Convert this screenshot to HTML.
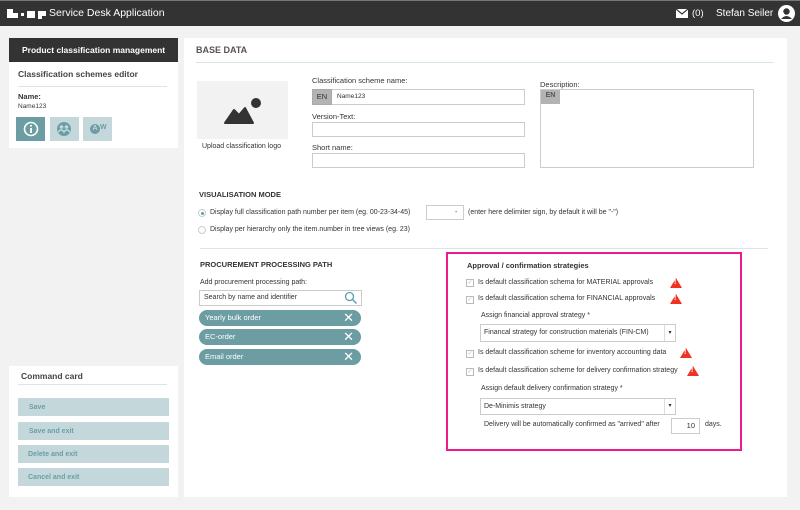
<!DOCTYPE html>
<html><head><meta charset="utf-8"><style>
*{box-sizing:border-box;margin:0;padding:0}
body{width:800px;height:510px;background:#f2f2f2;font-family:"Liberation Sans",Arial,sans-serif;color:#333;position:relative;overflow:hidden;font-size:8px}
.a{position:absolute}
.top{left:0;top:0;width:800px;height:26px;background:#333;border-top:1px solid #777}
.white{background:#fff}
.inp{position:absolute;background:#fff;border:1px solid #ccc}
.lbl{position:absolute;font-size:7.5px;color:#333;white-space:nowrap}
.b{font-weight:bold}
.pill{position:absolute;left:199px;width:162px;height:16px;background:#6b9da2;border-radius:8px;color:#fff;font-size:7.5px;line-height:16px;padding-left:6px}
.pill span{position:absolute;right:7px;top:0;font-size:13px;line-height:15px;font-weight:normal}
.btn{position:absolute;left:18px;width:151px;height:18px;background:#c4d8db;color:#6a9ea3;font-size:7px;font-weight:bold;line-height:20px;padding-left:11px}
.cb{position:absolute;left:466px;width:8px;height:8px;border:1px solid #bbb;background:#fff;font-size:6px;line-height:6px;color:#9cc;text-align:center}
.warn{position:absolute;width:0;height:0;border-left:6px solid transparent;border-right:6px solid transparent;border-bottom:10px solid #e32}
.warn:after{content:"!";position:absolute;left:-2px;top:1px;color:#fff;font-size:7px;font-weight:bold}
.sel{position:absolute;left:480px;width:196px;background:#fff;border:1px solid #ccc;font-size:7px;padding-left:3px}
.sel:after{content:"▾";position:absolute;right:0;top:0;width:10px;height:100%;border-left:1px solid #ddd;font-size:6px;text-align:center}
</style></head><body>
<div class="a top"></div>
<div class="a" style="left:7px;top:9px;width:6px;height:9px;background:#fff"></div>
<div class="a" style="left:7px;top:13px;width:11px;height:5px;background:#fff"></div>
<div class="a" style="left:21px;top:13px;width:3px;height:3px;background:#fff"></div>
<div class="a" style="left:27px;top:11px;width:8px;height:7px;background:#fff"></div>
<div class="a" style="left:38px;top:11px;width:8px;height:5px;background:#fff"></div>
<div class="a" style="left:38px;top:11px;width:4px;height:8px;background:#fff"></div>
<div class="a" style="left:49px;top:7px;font-size:10.5px;color:#fff">Service Desk Application</div>
<div class="a" style="left:676px;top:9px;width:12px;height:9px;background:#fff"></div>
<svg class="a" style="left:676px;top:9px" width="12" height="9"><path d="M0 0L6 5L12 0" stroke="#333" stroke-width="1.2" fill="none"/></svg>
<div class="a" style="left:692px;top:8px;font-size:9.5px;color:#fff">(0)</div>
<div class="a" style="left:716px;top:8px;font-size:10px;color:#fff">Stefan Seiler</div>
<svg class="a" style="left:778px;top:5px" width="17" height="17"><circle cx="8.5" cy="8.5" r="8.5" fill="#fff"/><circle cx="8.5" cy="6.5" r="3.2" fill="#333"/><path d="M3 14Q8.5 8 14 14Z" fill="#333"/></svg>

<div class="a white" style="left:9px;top:38px;width:169px;height:110px"></div>
<div class="a" style="left:9px;top:38px;width:169px;height:24px;background:#333;color:#fff;font-size:8.5px;font-weight:bold;line-height:24px;padding-left:13px;white-space:nowrap">Product classification management</div>
<div class="lbl b" style="left:18px;top:69px;font-size:8.5px;color:#444">Classification schemes editor</div>
<div class="a" style="left:18px;top:86px;width:149px;height:1px;background:#d8e6e8"></div>
<div class="lbl b" style="left:18px;top:92px">Name:</div>
<div class="lbl" style="left:18px;top:103px;font-size:6.5px">Name123</div>
<div class="a" style="left:16px;top:117px;width:29px;height:24px;background:#6b9da2"></div>
<svg class="a" style="left:23px;top:121px" width="16" height="16"><circle cx="8" cy="8" r="6.5" stroke="#fff" stroke-width="1.6" fill="none"/><rect x="7.1" y="7" width="1.8" height="5" fill="#fff"/><circle cx="8" cy="4.8" r="1" fill="#fff"/></svg>
<div class="a" style="left:50px;top:117px;width:29px;height:24px;background:#c4d8db"></div>
<svg class="a" style="left:56px;top:121px" width="16" height="16"><circle cx="8" cy="8" r="7" fill="#6b9da2"/><circle cx="5.5" cy="6" r="1.8" fill="#c4d8db"/><circle cx="10.5" cy="6" r="1.8" fill="#c4d8db"/><path d="M2 11Q5.5 7 8 11Q10.5 7 14 11" stroke="#c4d8db" stroke-width="1.5" fill="none"/></svg>
<div class="a" style="left:83px;top:117px;width:29px;height:24px;background:#c4d8db"></div>
<div class="a" style="left:90px;top:124px;width:10px;height:10px;border-radius:50%;background:#6b9da2;color:#c4d8db;font-size:7px;font-weight:bold;line-height:10px;text-align:center">A</div>
<div class="a" style="left:100px;top:124px;color:#6b9da2;font-size:7px;font-weight:bold">W</div>

<div class="a white" style="left:9px;top:366px;width:169px;height:131px"></div>
<div class="lbl b" style="left:21px;top:371px;font-size:8.5px;color:#444">Command card</div>
<div class="a" style="left:18px;top:384px;width:149px;height:1px;background:#d8e6e8"></div>
<div class="btn" style="top:398px">Save</div>
<div class="btn" style="top:422px">Save and exit</div>
<div class="btn" style="top:445px;padding-left:10px">Delete and exit</div>
<div class="btn" style="top:468px;padding-left:10px">Cancel and exit</div>

<div class="a white" style="left:184px;top:38px;width:603px;height:459px"></div>
<div class="lbl b" style="left:196px;top:45px;font-size:9px;color:#555">BASE DATA</div>
<div class="a" style="left:196px;top:62px;width:578px;height:1px;background:#d8e6e8"></div>
<div class="a" style="left:197px;top:81px;width:91px;height:58px;background:#f2f2f2"></div>
<svg class="a" style="left:224px;top:96px" width="38" height="30"><circle cx="32" cy="7" r="5" fill="#333"/><path d="M1 27L10 14L15 19L21 12L29 27Z" fill="#333" stroke="#333" stroke-width="2" stroke-linejoin="round"/></svg>
<div class="lbl" style="left:202px;top:143px;font-size:7px">Upload classification logo</div>

<div class="lbl" style="left:312px;top:76px">Classification scheme name:</div>
<div class="inp" style="left:312px;top:89px;width:213px;height:16px"></div>
<div class="a" style="left:312px;top:89px;width:20px;height:16px;background:#b3b3b3;border:1px solid #aaa;font-size:7.5px;line-height:14px;text-align:center">EN</div>
<div class="lbl" style="left:337px;top:93px;font-size:6.5px">Name123</div>
<div class="lbl" style="left:312px;top:112px">Version-Text:</div>
<div class="inp" style="left:312px;top:122px;width:213px;height:15px"></div>
<div class="lbl" style="left:312px;top:143px">Short name:</div>
<div class="inp" style="left:312px;top:153px;width:213px;height:15px"></div>
<div class="lbl" style="left:540px;top:80px">Description:</div>
<div class="inp" style="left:540px;top:89px;width:214px;height:79px"></div>
<div class="a" style="left:541px;top:90px;width:19px;height:14px;background:#b3b3b3;font-size:7px;line-height:12px;text-align:center;font-weight:bold;color:#555">EN</div>

<div class="lbl b" style="left:199px;top:190px;font-size:7.5px">VISUALISATION MODE</div>
<div class="a" style="left:198px;top:209px;width:8px;height:8px;border-radius:50%;border:1px solid #ccc;background:#fff"></div>
<div class="a" style="left:200.5px;top:211.5px;width:3px;height:3px;border-radius:50%;background:#5a9fb0"></div>
<div class="lbl" style="left:210px;top:209px;font-size:7px">Display full classification path number per item (eg. 00-23-34-45)</div>
<div class="inp" style="left:426px;top:205px;width:38px;height:15px"></div>
<div class="lbl" style="left:455px;top:209px;font-size:7px">-</div>
<div class="lbl" style="left:468px;top:209px;font-size:7px">(enter here delimiter sign, by default it will be "-")</div>
<div class="a" style="left:198px;top:226px;width:8px;height:8px;border-radius:50%;border:1px solid #ccc;background:#fff"></div>
<div class="lbl" style="left:210px;top:226px;font-size:7px">Display per hierarchy only the item.number in tree views (eg. 23)</div>
<div class="a" style="left:200px;top:248px;width:568px;height:1px;background:#d8e6e8"></div>

<div class="lbl b" style="left:200px;top:260px;font-size:7.5px">PROCUREMENT PROCESSING PATH</div>
<div class="lbl" style="left:200px;top:279px;font-size:7px">Add procurement processing path:</div>
<div class="inp" style="left:199px;top:290px;width:163px;height:16px"></div>
<div class="lbl" style="left:204px;top:294px;font-size:7px">Search by name and identifier</div>
<svg class="a" style="left:344px;top:291px" width="14" height="14"><circle cx="5.5" cy="5.5" r="4" stroke="#5a9fb0" stroke-width="1.3" fill="none"/><path d="M8.5 8.5L12.5 12.5" stroke="#5a9fb0" stroke-width="1.5"/></svg>
<div class="pill" style="top:310px">Yearly bulk order<span>✕</span></div>
<div class="pill" style="top:329px">EC-order<span>✕</span></div>
<div class="pill" style="top:349px">Email order<span>✕</span></div>

<div class="a" style="left:446px;top:252px;width:296px;height:199px;border:2px solid #ec1c8c"></div>
<div class="lbl b" style="left:467px;top:261px;font-size:7.5px">Approval / confirmation strategies</div>
<div class="cb" style="top:279px">✓</div><div class="lbl" style="left:478px;top:279px;font-size:7px">Is default classification schema for MATERIAL approvals</div><div class="warn" style="left:670px;top:278px"></div>
<div class="cb" style="top:296px">✓</div><div class="lbl" style="left:478px;top:295px;font-size:7px">Is default classification schema for FINANCIAL approvals</div><div class="warn" style="left:670px;top:294px"></div>
<div class="lbl" style="left:481px;top:312px;font-size:7px">Assign financial approval strategy *</div>
<div class="sel" style="top:324px;height:18px;line-height:16px">Financal strategy for construction materials (FIN-CM)</div>
<div class="cb" style="top:350px">✓</div><div class="lbl" style="left:478px;top:349px;font-size:7px">Is default classification scheme for inventory accounting data</div><div class="warn" style="left:680px;top:348px"></div>
<div class="cb" style="top:368px">✓</div><div class="lbl" style="left:478px;top:367px;font-size:7px">Is default classification scheme for delivery confirmation strategy</div><div class="warn" style="left:687px;top:366px"></div>
<div class="lbl" style="left:481px;top:385px;font-size:7px">Assign default delivery confirmation strategy *</div>
<div class="sel" style="top:398px;height:17px;line-height:15px">De-Minimis strategy</div>
<div class="lbl" style="left:484px;top:421px;font-size:7px">Delivery will be automatically confirmed as "arrived" after</div>
<div class="inp" style="left:671px;top:418px;width:29px;height:16px;font-size:7.5px;text-align:right;padding-right:4px;line-height:14px">10</div>
<div class="lbl" style="left:705px;top:421px;font-size:7px">days.</div>
</body></html>
